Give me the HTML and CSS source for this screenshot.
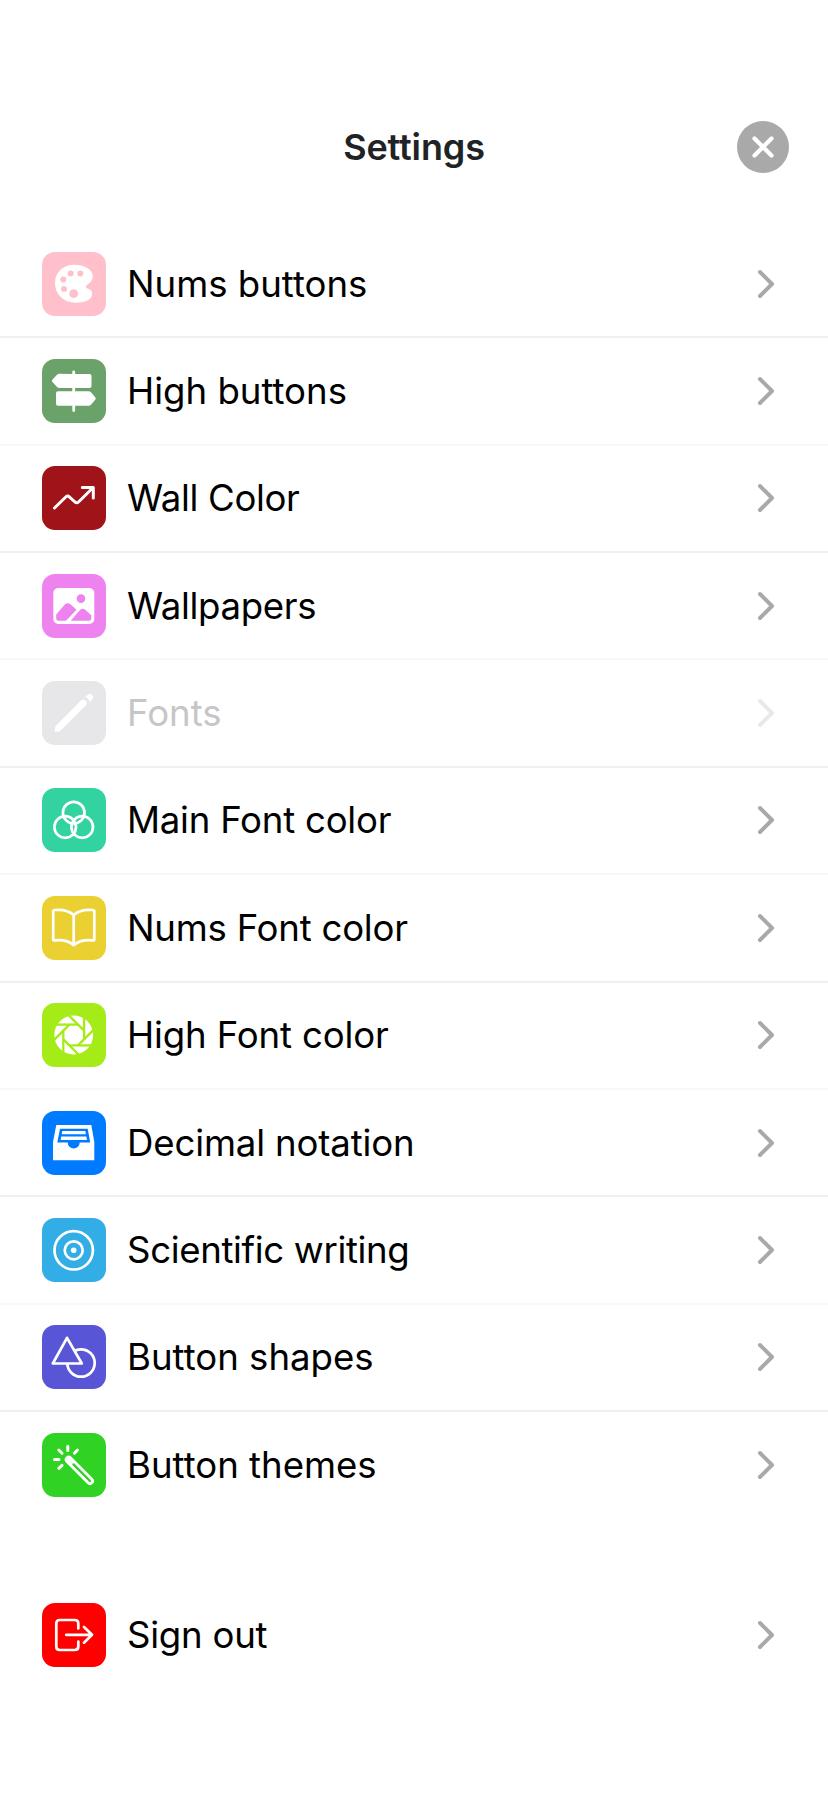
FILE: index.html
```html
<!DOCTYPE html>
<html lang="en">
<head>
<meta charset="utf-8">
<title>Settings</title>
<link rel="stylesheet" href="styles.css">
</head>
<body>
<header class="header">
  <h1 class="title">Settings</h1>
  <button class="close" aria-label="Close"><svg viewBox="0 0 52 52"><path d="M17.500 17.500l17 17M34.500 17.500l-17 17"/></svg></button>
</header>
<main>
<ul class="list">
  <li class="row"><span class="tile pink"><svg viewBox="0 0 64 64"><path class="fill" d="M32 12.700C21 12.700 13 20.500 13 31C13 42 21.500 50.700 34 50.700C42 50.700 47.500 48.500 49.500 44.500C50.700 41.500 50.300 39.500 48.500 38C46.500 36.500 44 37 44 34.800C44 33 46 32.500 48 30.500C50 28.500 51 26 50.800 23.500C50 17 42 12.700 32 12.700Z"/><g class="hole"><circle cx="28.700" cy="21.500" r="3"/><circle cx="38.300" cy="21.500" r="3"/><circle cx="21.300" cy="27.500" r="3"/><circle cx="22" cy="37" r="3"/><circle cx="31.700" cy="41.700" r="4.400"/></g></svg></span><span class="label">Nums buttons</span><svg class="chevron" viewBox="0 0 20 32"><path d="M4 4l12 12L4 28"/></svg></li>
  <li class="row"><span class="tile green"><svg viewBox="0 0 64 64"><path class="fill" d="M30.300 15V13a1.400 1.400 0 0 1 2.800 0v2H47.500q2 0 2 2V27q0 2-2 2H17.500q-1.500 0-2.500-1L10.300 22.800q-.8-1 0-2L15 15.800q1-1 2.500-1ZM30.300 28h2.800v5h-2.800ZM16 32.300H46.500q1.500 0 2.500 1L53.400 38.600q.8 1 0 2L49 45.800q-1 1-2.500 1H33.100V51.500a1.400 1.400 0 0 1-2.800 0V46.800H16q-2 0-2-2V34.300q0-2 2-2Z"/></svg></span><span class="label">High buttons</span><svg class="chevron" viewBox="0 0 20 32"><path d="M4 4l12 12L4 28"/></svg></li>
  <li class="row"><span class="tile maroon"><svg viewBox="0 0 64 64"><path class="line" d="M12.500 42L24 30.800Q25.700 29.300 27.300 30.800L33 36Q34.800 37.500 36.500 36L51 21.700M40.300 21.500H51.300V32"/></svg></span><span class="label tighter">Wall Color</span><svg class="chevron" viewBox="0 0 20 32"><path d="M4 4l12 12L4 28"/></svg></li>
  <li class="row"><span class="tile violet"><svg viewBox="0 0 64 64"><rect class="fill" x="11.300" y="14" width="41" height="36" rx="5"/><g class="hole"><circle cx="39" cy="24.600" r="4.300"/><path d="M14.200 40.500L22.800 30.500Q25.700 27.800 28.700 30.500L34.500 35.700L24 46.800H16.500Q14.200 46.800 14.200 44.500ZM28.700 46.800L38 36Q40.700 33.500 43.500 36L49.300 41.300V44.500Q49.300 46.800 47 46.800Z"/></g></svg></span><span class="label tighter">Wallpapers</span><svg class="chevron" viewBox="0 0 20 32"><path d="M4 4l12 12L4 28"/></svg></li>
  <li class="row disabled"><span class="tile gray"><svg viewBox="0 0 64 64"><path class="pencil" d="M16.600 46.800L41.200 22.200"/><path class="fill" d="M13.300 46L18 50L14 51Q12.600 51 12.900 49.500Z"/><path class="fill" d="M43.200 16.200L46 13.400Q48.200 11.800 50.300 13.900Q52.200 16 50.700 18L48 20.900Q46.500 17 43.200 16.200Z"/></svg></span><span class="label">Fonts</span><svg class="chevron" viewBox="0 0 20 32"><path d="M4 4l12 12L4 28"/></svg></li>
  <li class="row"><span class="tile mint"><svg viewBox="0 0 64 64"><g class="line thin"><circle cx="31.700" cy="24.700" r="10.800"/><circle cx="23.200" cy="39" r="10.800"/><circle cx="40.200" cy="39" r="10.800"/></g></svg></span><span class="label tight">Main Font color</span><svg class="chevron" viewBox="0 0 20 32"><path d="M4 4l12 12L4 28"/></svg></li>
  <li class="row"><span class="tile yellow"><svg viewBox="0 0 64 64"><path class="line thin" d="M31.700 19Q25 12.800 12.300 14Q11.200 14.100 11.200 15.200V43.200Q11.200 44.500 12.500 44.300Q25 43 31.700 49.200Q38.400 43 51 44.300Q52.300 44.500 52.300 43.200V15.200Q52.300 14.100 51.200 14Q38.400 12.800 31.700 19V49"/></svg></span><span class="label tight">Nums Font color</span><svg class="chevron" viewBox="0 0 20 32"><path d="M4 4l12 12L4 28"/></svg></li>
  <li class="row"><span class="tile lime"><svg viewBox="0 0 64 64"><circle class="fill" cx="31.700" cy="32" r="19.400"/><g class="blades"><path d="M12 21.600H36"/><path d="M12 21.600H36" transform="rotate(45 31.700 32)"/><path d="M12 21.600H36" transform="rotate(90 31.700 32)"/><path d="M12 21.600H36" transform="rotate(135 31.700 32)"/><path d="M12 21.600H36" transform="rotate(180 31.700 32)"/><path d="M12 21.600H36" transform="rotate(225 31.700 32)"/><path d="M12 21.600H36" transform="rotate(270 31.700 32)"/><path d="M12 21.600H36" transform="rotate(315 31.700 32)"/></g></svg></span><span class="label snug">High Font color</span><svg class="chevron" viewBox="0 0 20 32"><path d="M4 4l12 12L4 28"/></svg></li>
  <li class="row"><span class="tile blue"><svg viewBox="0 0 64 64"><path class="fill" d="M14.300 14H49.300L52.300 31V49.300H11V31Z"/><path class="hole" d="M18 17.700H45.700L48.200 31.500H37.700A6 6 0 0 1 25.700 31.500H15.300Z"/><path class="fill" d="M20.300 20H43.300L43.900 23.300H19.700ZM19.200 25.500H44.400L45 29H18.600Z"/></svg></span><span class="label snug">Decimal notation</span><svg class="chevron" viewBox="0 0 20 32"><path d="M4 4l12 12L4 28"/></svg></li>
  <li class="row"><span class="tile sky"><svg viewBox="0 0 64 64"><circle class="line thin" cx="31.700" cy="32.300" r="19.200"/><circle class="line thin" cx="31.700" cy="32.300" r="9"/><circle class="fill" cx="31.700" cy="32.300" r="2.800"/></svg></span><span class="label tighter">Scientific writing</span><svg class="chevron" viewBox="0 0 20 32"><path d="M4 4l12 12L4 28"/></svg></li>
  <li class="row"><span class="tile indigo"><svg viewBox="0 0 64 64"><circle class="line thin" cx="39" cy="38" r="13.700"/><path class="line thin solid" d="M25 12.800L39.800 38.500H10.800Z"/></svg></span><span class="label">Button shapes</span><svg class="chevron" viewBox="0 0 20 32"><path d="M4 4l12 12L4 28"/></svg></li>
  <li class="row"><span class="tile leaf"><svg viewBox="0 0 64 64"><path class="line" d="M25.800 13.200V17.500M16.800 17L20 20.200M35.500 17L32.400 20.200M12.500 26.500H17M20 32.300L16.800 35.300"/><path class="wand" d="M26.800 26.700L48 48"/><path class="wand-core" d="M31.500 31.400L48 48"/></svg></span><span class="label">Button themes</span><svg class="chevron" viewBox="0 0 20 32"><path d="M4 4l12 12L4 28"/></svg></li>
</ul>
<ul class="list account">
  <li class="row"><span class="tile red"><svg viewBox="0 0 64 64"><path class="line thin" d="M36.300 25.500V20.500Q36.300 17 32.800 17H17.800Q14.300 17 14.300 20.500V43.500Q14.300 47 17.800 47H32.800Q36.300 47 36.300 43.500V38.500M24.200 31.800H50M42 24L50 31.800L42 39.700"/></svg></span><span class="label tight">Sign out</span><svg class="chevron" viewBox="0 0 20 32"><path d="M4 4l12 12L4 28"/></svg></li>
</ul>
</main>
</body>
</html>
```
FILE: styles.css
```css
* { box-sizing: border-box; }
body {
  margin: 0;
  min-height: 1794px;
  background: #fff;
  color: #000;
  font-family: Inter, "Liberation Sans", sans-serif;
}
.header {
  display: grid;
  grid-template-columns: 1fr auto 1fr;
  align-items: center;
  height: 231px;
  padding: 62px 39px 0;
}
.title {
  grid-column: 2;
  margin: 0;
  color: #1f2326;
  font-size: 36px;
  font-weight: 600;
  line-height: 44px;
  letter-spacing: -0.15px;
}
.close {
  justify-self: end;
  width: 52px;
  height: 52px;
  padding: 0;
  border: 0;
  border-radius: 50%;
  background: #a9a9a9;
}
.close svg { display: block; fill: none; stroke: #fff; stroke-width: 4.2; stroke-linecap: round; }
.list { margin: 0; padding: 0; list-style: none; }
.row {
  display: flex;
  align-items: center;
  height: 107.36px;
  padding: 0 52px 0 42px;
  border-bottom: 2px solid #f0f0f1;
}
.row:nth-child(even) { border-bottom-color: #f8f8f9; }
.row:last-child { border-bottom-color: transparent; }
.account { padding-top: 62.6px; }
.tile {
  flex: none;
  width: 64px;
  height: 64px;
  margin-right: 21px;
  border-radius: 13px;
  background: var(--tint);
}
.tile svg { display: block; width: 64px; height: 64px; }
.fill { fill: #fff; }
.hole { fill: var(--tint); }
.line { fill: none; stroke: #fff; stroke-width: 3; stroke-linecap: round; stroke-linejoin: round; }
.thin { stroke-width: 2.7; }
.solid { fill: var(--tint); }
.pencil { stroke: #fff; stroke-width: 6.8; stroke-linecap: round; }
.blades { stroke: var(--tint); stroke-width: 2.3; }
.wand { stroke: #fff; stroke-width: 8; stroke-linecap: round; }
.wand-core { stroke: var(--tint); stroke-width: 2.4; stroke-linecap: round; }
.label { flex: 1; font-size: 36.6px; line-height: 46px; white-space: nowrap; }
.snug { letter-spacing: -0.14px; }
.tight { letter-spacing: -0.23px; }
.tighter { letter-spacing: -0.34px; }
.chevron { width: 20px; height: 32px; fill: none; stroke: #a9a9a9; stroke-width: 4; stroke-linecap: round; stroke-linejoin: round; }
.disabled .label { color: #c6c6c8; }
.disabled .chevron { stroke: #e9e9ea; }
.pink { --tint: #ffc0cb; }
.green { --tint: #6aa26a; }
.maroon { --tint: #a01318; }
.violet { --tint: #ee82ee; }
.gray { --tint: #e7e7e9; }
.mint { --tint: #32d3a0; }
.yellow { --tint: #ebd031; }
.lime { --tint: #a5eb18; }
.blue { --tint: #007aff; }
.sky { --tint: #32ade6; }
.indigo { --tint: #5856d6; }
.leaf { --tint: #30d324; }
.red { --tint: #ff0000; }
```
